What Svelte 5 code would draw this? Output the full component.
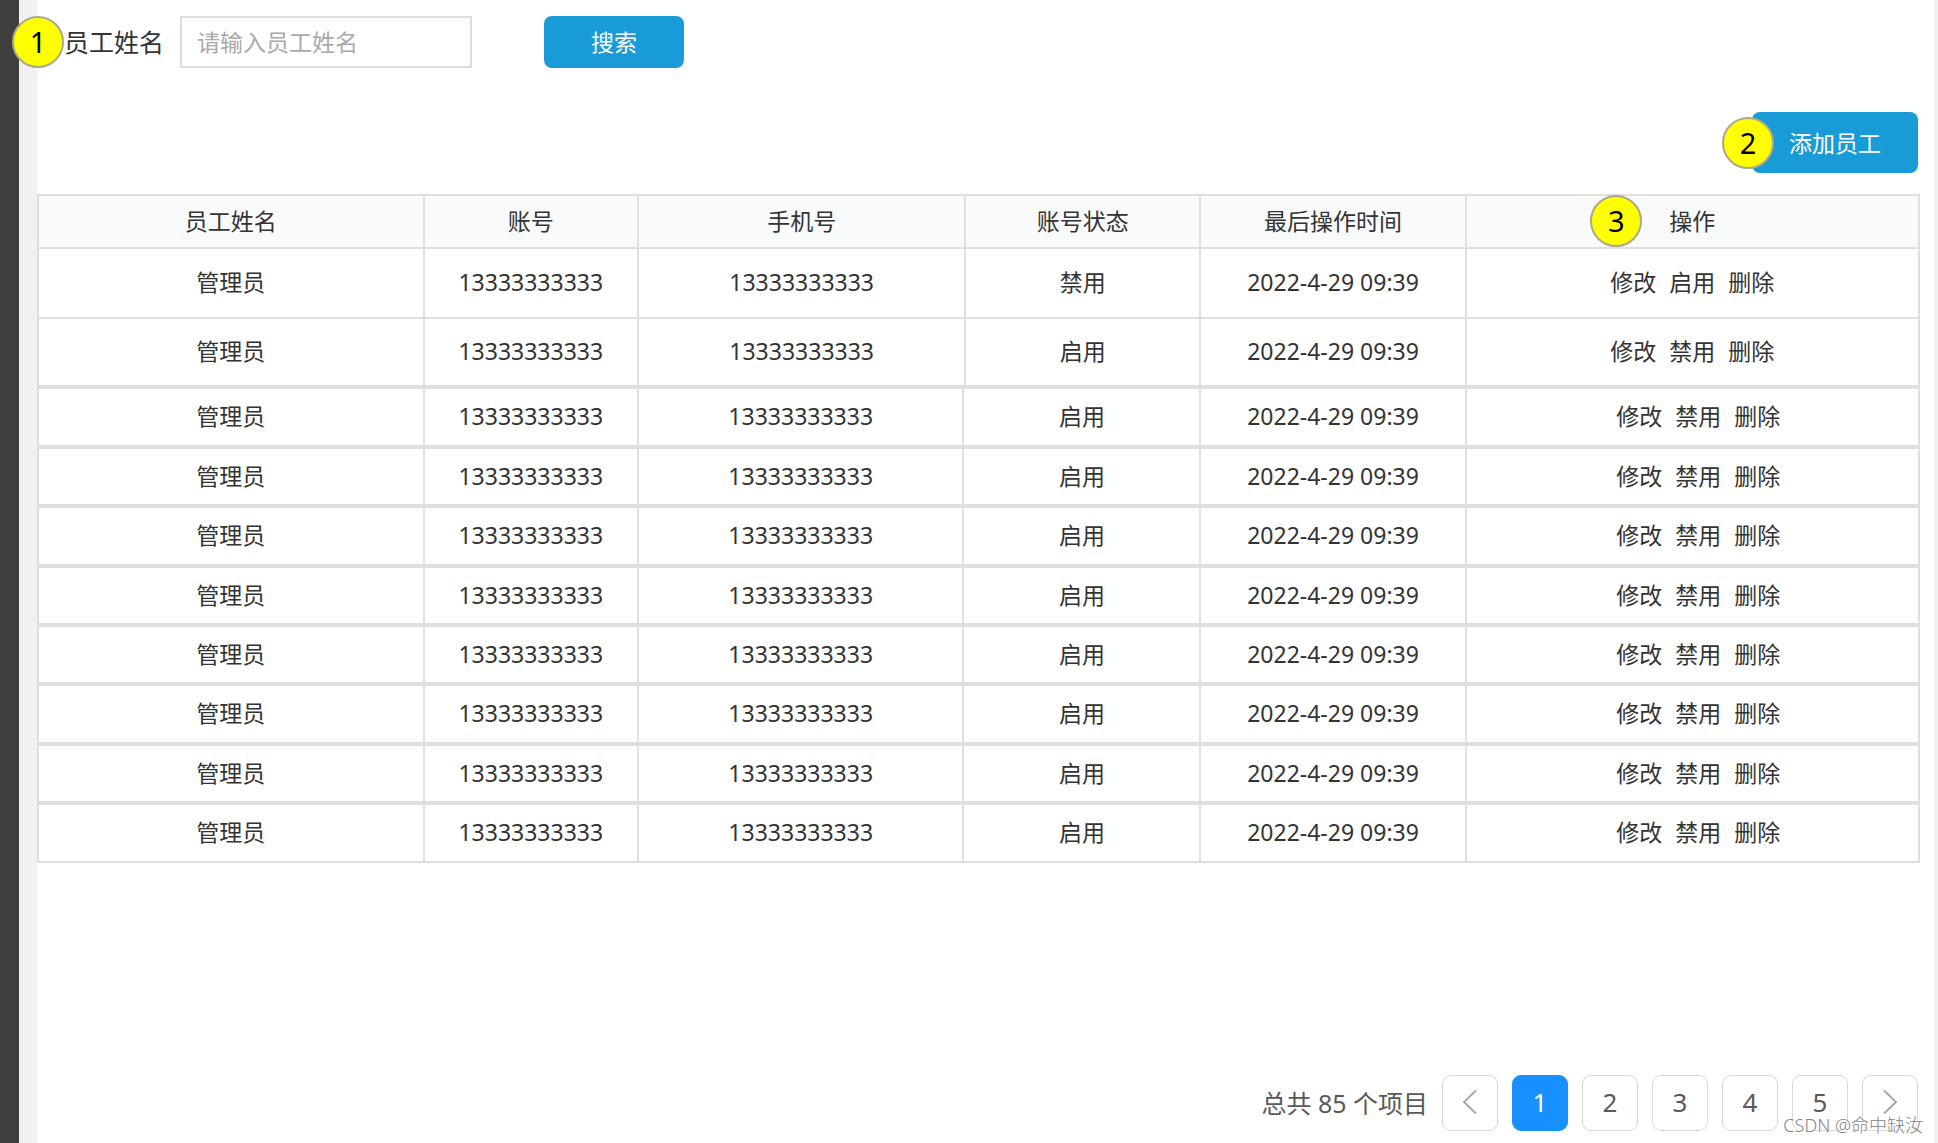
<script>
  const headings = ['员工姓名', '账号', '手机号', '账号状态', '最后操作时间', '操作'];

  const makeRow = (status) => ({
    name: '管理员',
    account: '13333333333',
    phone: '13333333333',
    status,
    time: '2022-4-29 09:39',
    toggle: status === '启用' ? '禁用' : '启用',
  });

  const firstRows = [makeRow('禁用'), makeRow('启用')];
  const otherRows = Array.from({ length: 8 }, () => makeRow('启用'));

  const pages = [1, 2, 3, 4, 5];
  let current = $state(1);
  let keyword = $state('');
</script>

{#snippet cells(row)}
  <td>{row.name}</td>
  <td>{row.account}</td>
  <td>{row.phone}</td>
  <td>{row.status}</td>
  <td>{row.time}</td>
  <td class="ops">
    <div class="links">
      <a href="#edit">修改</a>
      <a href="#toggle">{row.toggle}</a>
      <a href="#delete">删除</a>
    </div>
  </td>
{/snippet}

{#snippet columns()}
  <colgroup>
    <col class="c-name" />
    <col class="c-account" />
    <col class="c-phone" />
    <col class="c-status" />
    <col class="c-time" />
    <col />
  </colgroup>
{/snippet}

<div class="page">
  <main>
    <form class="search" onsubmit={(e) => e.preventDefault()}>
      <span class="note note-search">1</span>
      <label for="name">员工姓名</label>
      <input id="name" type="text" placeholder="请输入员工姓名" bind:value={keyword} />
      <button type="submit" class="primary">搜索</button>
    </form>

    <div class="toolbar">
      <button type="button" class="primary add">添加员工</button>
      <span class="note note-add">2</span>
    </div>

    <table class="lead">
      {@render columns()}
      <thead>
        <tr>
          {#each headings as heading, i}
            <th scope="col">
              {#if i === 5}
                <div class="th-ops">
                  <span class="note note-ops">3</span>
                  {heading}
                </div>
              {:else}
                {heading}
              {/if}
            </th>
          {/each}
        </tr>
      </thead>
      <tbody>
        {#each firstRows as row}
          <tr>{@render cells(row)}</tr>
        {/each}
      </tbody>
    </table>

    <table class="rest">
      {@render columns()}
      <tbody>
        {#each otherRows as row}
          <tr>{@render cells(row)}</tr>
        {/each}
      </tbody>
    </table>

    <nav class="pager" aria-label="分页">
      <span class="total">总共 85 个项目</span>
      <button type="button" aria-label="上一页" onclick={() => (current = Math.max(1, current - 1))}>
        <svg viewBox="0 0 16 26" width="16" height="26"><path d="M14 1.5 2 13l12 11.5" /></svg>
      </button>
      {#each pages as page}
        <button type="button" class:active={page === current} onclick={() => (current = page)}>{page}</button>
      {/each}
      <button type="button" aria-label="下一页" onclick={() => (current = Math.min(5, current + 1))}>
        <svg viewBox="0 0 16 26" width="16" height="26"><path d="M2 1.5 14 13 2 24.5" /></svg>
      </button>
      <span class="watermark">CSDN @命中缺汝</span>
    </nav>
  </main>
</div>

<style>
  :global(body) {
    background: #fff;
  }

  .page {
    box-sizing: border-box;
    min-height: 100vh;
    display: flex;
    border-left: 19px solid #3f3f3f;
    padding: 0 4px 0 18px;
    background: #f1f1f1;
    color: #333;
    font-family: 'Noto Sans', 'Noto Sans CJK SC', sans-serif;
    font-size: 23px;
    line-height: 32px;
  }

  main {
    flex: 1;
    min-width: 0;
    display: flex;
    flex-direction: column;
    padding: 16px 14px 12px 0;
    background: #fff;
  }

  button,
  input {
    box-sizing: border-box;
    margin: 0;
    font: inherit;
  }

  button {
    cursor: pointer;
  }

  .search {
    position: relative;
    display: flex;
    align-items: center;
    padding-left: 27px;
  }

  .search label {
    margin-right: 16px;
    font-size: 25px;
  }

  .search input {
    width: 292px;
    height: 52px;
    margin-right: 72px;
    padding: 0 15px;
    border: 2px solid #ddd;
    background: #fff;
    color: #333;
    outline: none;
  }

  .search input::placeholder {
    color: #a9a9a9;
    opacity: 1;
  }

  .primary {
    width: 140px;
    height: 52px;
    padding: 0;
    border: 0;
    border-radius: 8px;
    background: #189bd7;
    color: #fff;
  }

  .toolbar {
    position: relative;
    display: flex;
    justify-content: flex-end;
    margin: 44px 0 21px;
    padding-right: 2px;
  }

  .primary.add {
    width: 166px;
    height: 61px;
  }

  .note {
    position: absolute;
    box-sizing: border-box;
    width: 52px;
    height: 52px;
    border: 2px solid #a9a98c;
    border-radius: 50%;
    background: #ff0;
    color: #000;
    font-size: 29px;
    line-height: 48px;
    text-align: center;
  }

  .note-search {
    left: -25px;
    top: 0;
  }

  .note-add {
    right: 146px;
    top: 5px;
  }

  .th-ops {
    position: relative;
  }

  .note-ops {
    left: calc(50% - 102px);
    top: -10px;
  }

  table {
    width: 100%;
    table-layout: fixed;
    border-collapse: collapse;
  }

  .c-name { width: 20.5%; }
  .c-account { width: 11.4%; }
  .c-phone { width: 17.4%; }
  .c-status { width: 12.5%; }
  .c-time { width: 14.1%; }
  .rest .c-phone { width: 17.3%; }
  .rest .c-status { width: 12.6%; }

  th,
  td {
    padding: 0 0 2px;
    border: 2px solid #dfdfdf;
    font-weight: 400;
    text-align: center;
    vertical-align: middle;
  }

  th {
    background: #f9fafc;
  }

  thead tr {
    height: 53px;
  }

  .lead tbody tr:first-child {
    height: 70px;
  }

  .lead tbody tr:last-child {
    height: 68px;
  }

  .rest td {
    border-bottom-width: 4px;
  }

  .rest tr:last-child td {
    border-bottom-width: 2px;
  }

  .rest tr {
    height: 59px;
  }

  .rest tr:nth-child(3n) {
    height: 60px;
  }

  .rest .ops {
    padding-left: 12px;
  }

  .links {
    display: flex;
    justify-content: center;
    gap: 13px;
  }

  .links a {
    color: inherit;
    text-decoration: none;
  }

  .pager {
    position: relative;
    display: flex;
    align-items: center;
    justify-content: flex-end;
    gap: 14px;
    margin-top: auto;
    padding-right: 2px;
    color: #595959;
    font-size: 25px;
  }

  .pager button {
    display: flex;
    align-items: center;
    justify-content: center;
    width: 56px;
    height: 56px;
    padding: 0 0 2px;
    border: 1px solid #d9d9d9;
    border-radius: 9px;
    background: #fff;
    color: #595959;
    font-size: 26px;
  }

  .pager button.active {
    border-color: #1890ff;
    background: #1890ff;
    color: #fff;
  }

  .pager svg {
    fill: none;
    stroke: #a9a9ad;
    stroke-width: 2;
  }

  .watermark {
    position: absolute;
    right: -3px;
    bottom: -6px;
    color: #858585;
    font-size: 18px;
    font-weight: 300;
    line-height: 24px;
    white-space: nowrap;
    text-shadow: 1px 1px 0 #fff, -1px -1px 0 #fff;
    pointer-events: none;
  }
</style>
